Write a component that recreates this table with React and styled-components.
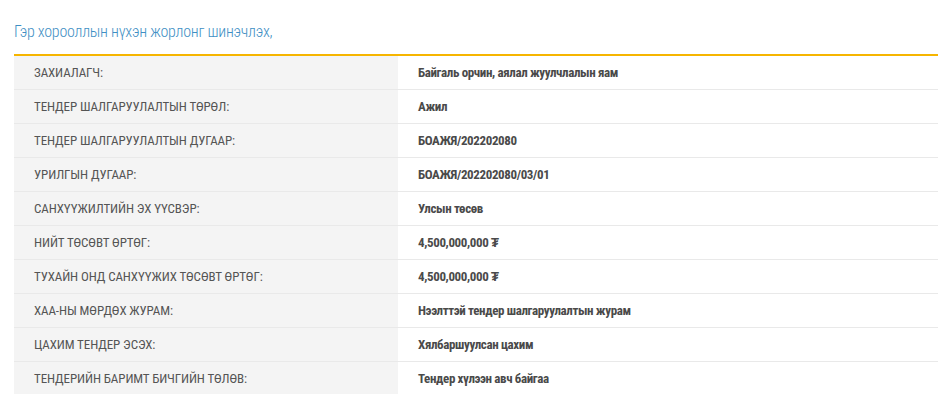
import React from "react";
import styled, { createGlobalStyle } from "styled-components";

const GlobalStyle = createGlobalStyle`
  html, body { margin: 0; padding: 0; background: #fff; }
  body { font-family: "Roboto Condensed", "Liberation Sans Narrow", sans-serif; }
`;

const Page = styled.div`
  padding: 20px 0 0 14px;
`;

const Title = styled.h3`
  margin: 0;
  height: 34px;
  font-family: "Roboto Condensed", sans-serif;
  font-weight: 300;
  font-size: 16px;
  letter-spacing: -0.25px;
  line-height: 24px;
  color: #3f8fc4;
`;

const Table = styled.div`
  border-top: 2px solid #f6b500;
`;

const Row = styled.div`
  display: grid;
  grid-template-columns: 384px 1fr;
  height: 34px;
  border-bottom: 1px solid #e9e9e9;
  box-sizing: border-box;
`;

const Label = styled.div`
  display: flex;
  align-items: center;
  padding-left: 20px;
  background: #f4f4f4;
  font-size: 13px;
  letter-spacing: -0.1px;
  color: #555;
  text-transform: uppercase;
`;

const Value = styled.div`
  display: flex;
  align-items: center;
  padding-left: 20px;
  font-size: 13px;
  letter-spacing: -0.37px;
  font-weight: 700;
  color: #4a4a4a;
`;

const rows = [
  ["ЗАХИАЛАГЧ:", "Байгаль орчин, аялал жуулчлалын яам"],
  ["ТЕНДЕР ШАЛГАРУУЛАЛТЫН ТӨРӨЛ:", "Ажил"],
  ["ТЕНДЕР ШАЛГАРУУЛАЛТЫН ДУГААР:", "БОАЖЯ/202202080"],
  ["УРИЛГЫН ДУГААР:", "БОАЖЯ/202202080/03/01"],
  ["САНХҮҮЖИЛТИЙН ЭХ ҮҮСВЭР:", "Улсын төсөв"],
  ["НИЙТ ТӨСӨВТ ӨРТӨГ:", "4,500,000,000 ₮"],
  ["ТУХАЙН ОНД САНХҮҮЖИХ ТӨСӨВТ ӨРТӨГ:", "4,500,000,000 ₮"],
  ["ХАА-НЫ МӨРДӨХ ЖУРАМ:", "Нээлттэй тендер шалгаруулалтын журам"],
  ["ЦАХИМ ТЕНДЕР ЭСЭХ:", "Хялбаршуулсан цахим"],
  ["ТЕНДЕРИЙН БАРИМТ БИЧГИЙН ТӨЛӨВ:", "Тендер хүлээн авч байгаа"],
];

export default function App() {
  return (
    <Page>
      <GlobalStyle />
      <Title>Гэр хорооллын нүхэн жорлонг шинэчлэх,</Title>
      <Table>
        {rows.map(([l, v]) => (
          <Row key={l}>
            <Label>{l}</Label>
            <Value>{v}</Value>
          </Row>
        ))}
      </Table>
    </Page>
  );
}
